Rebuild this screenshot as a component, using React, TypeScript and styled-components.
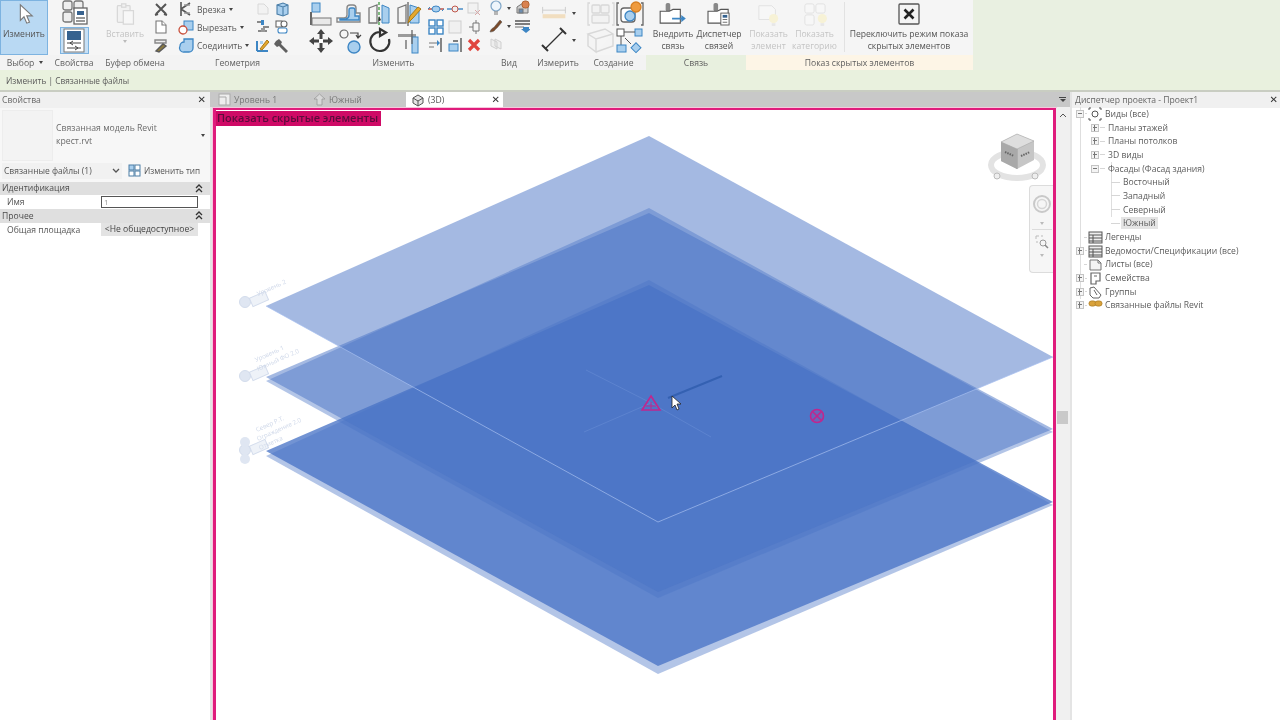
import React from "react";
import styled, { createGlobalStyle } from "styled-components";

const GlobalStyle = createGlobalStyle`
  html, body {
    margin: 0;
    padding: 0;
    width: 1280px;
    height: 720px;
    overflow: hidden;
    background: #fff;
  }
  * { box-sizing: border-box; }
`;

const BLUE = "#3d86c4";
const SKY = "#a9cfee";
const PALE = "#d8d8d8";

// all the ribbon pictures, drawn in their own little coordinates
const icons: Record<string, React.ReactNode> = {
  cursor: <path d="M8 2v17l4-4 3 7 3-1-3-7h6z" fill="#fff" stroke="#7a7a7a" strokeWidth="1.2" />,
  props: (
    <g fill="#eee" stroke="#777" strokeWidth="1.3">
      <rect x="2" y="1" width="9" height="9" rx="2" />
      <rect x="13" y="1" width="9" height="9" rx="2" />
      <rect x="2" y="12" width="9" height="10" rx="2" />
      <rect x="13" y="8" width="13" height="16" fill="#fff" stroke="#666" />
      <rect x="16" y="11" width="7" height="4" fill="#39638f" stroke="none" />
      <path d="M15 18h9M15 21h9" />
    </g>
  ),
  typeProps: (
    <g>
      <rect x="1" y="1" width="20" height="23" fill="#fff" stroke="#777" />
      <rect x="4" y="3" width="14" height="9" fill="#35628f" />
      <path d="M4 15h14M4 20h14" stroke="#444" strokeWidth="1.2" />
      <path d="M10 13l-3 2 3 2M12 18l3 2-3 2" fill="none" stroke="#444" />
    </g>
  ),
  paste: (
    <g fill="#f2f2f2" stroke={PALE} strokeWidth="1.5">
      <rect x="3" y="3" width="15" height="20" rx="1" />
      <rect x="8" y="1" width="5" height="4" />
      <rect x="10" y="9" width="12" height="16" fill="#f7f7f7" />
    </g>
  ),
  cut: <path d="M3 3l10 10M13 3L3 13M2 14l3-1M14 14l-3-1" stroke="#555" strokeWidth="2" fill="none" />,
  copy: (
    <g fill="#fff" stroke="#777" strokeWidth="1.1">
      <path d="M3 2h6l4 4v8H3z" />
      <path d="M9 2v4h4" />
    </g>
  ),
  brush: (
    <g fill="none" strokeWidth="1.4">
      <path d="M2 3h11v3H2z" stroke="#888" fill="#eee" />
      <path d="M3 14l7-7 3 2-7 6z" fill="#8c7b3f" stroke="#5a5a5a" />
    </g>
  ),
  join: (
    <g fill="none" stroke="#555" strokeWidth="1.6">
      <path d="M3 1v14M3 8l9-6M3 8l9 6" />
      <path d="M6 4h6M6 12h6" stroke="#999" />
    </g>
  ),
  cutGeo: (
    <g>
      <rect x="6" y="2" width="9" height="9" fill={SKY} stroke={BLUE} />
      <circle cx="5" cy="11" r="4" fill="#fff" stroke="#c8503c" strokeWidth="1.3" />
    </g>
  ),
  joinGeo: <path d="M2 9a4 4 0 014-4V2h9v9a4 4 0 01-4 4H6a4 4 0 01-4-6z" fill={SKY} stroke={BLUE} strokeWidth="1.3" />,
  docPale: <path d="M3 3h6l4 4v6H3z" fill="#f2f2f2" stroke={PALE} />,
  box3d: (
    <g stroke="#4a7ea8" strokeWidth="1.1">
      <path d="M3 4l6-2 5 2v9l-5 2-6-2z" fill={SKY} />
      <path d="M9 6v9M3 4l6 2 5-2" fill="none" />
    </g>
  ),
  wall: (
    <g>
      <path d="M2 3h5M8 8h6M3 12h9" stroke="#666" strokeWidth="1.4" />
      <rect x="6" y="1" width="3" height="5" fill={BLUE} />
      <rect x="6" y="9" width="4" height="4" fill="#999" />
    </g>
  ),
  shapes: (
    <g fill="#fff" stroke="#666" strokeWidth="1.1">
      <rect x="2" y="2" width="6" height="6" />
      <circle cx="10" cy="5" r="3" />
      <rect x="4" y="9" width="9" height="5" rx="2" stroke={BLUE} />
    </g>
  ),
  pencilPlan: (
    <g>
      <path d="M2 14V4M2 14h11" stroke={BLUE} strokeWidth="2" />
      <path d="M5 12L12 3l2 2-7 8z" fill="#e6a82c" stroke="#a87918" />
      <rect x="5" y="4" width="3" height="3" fill={SKY} />
    </g>
  ),
  wrench: <path d="M2 4l3-2 3 3-1 2 7 7-2 2-7-7-2 1-3-3z" fill="#606060" />,
  align: (
    <g>
      <rect x="3" y="1" width="8" height="9" fill={SKY} stroke={BLUE} />
      <rect x="1" y="10" width="2" height="13" fill="#666" />
      <rect x="3" y="16" width="19" height="7" fill="#e9e9e9" stroke="#777" />
    </g>
  ),
  offset: (
    <g fill="none" strokeWidth="1.4">
      <path d="M1 20v-4h7a3 3 0 003-3V6a3 3 0 013-3h3a3 3 0 013 3v5h4v9z" stroke="#888" fill="#f3f3f3" />
      <path d="M4 18v-1h6a4 4 0 003-4V8a2 2 0 012-2h2a2 2 0 012 2v6h4v4z" stroke={BLUE} fill={SKY} />
    </g>
  ),
  mirrorA: (
    <g>
      <path d="M2 6l8-3v18H2z" fill="#f4f4f4" stroke="#777" strokeWidth="1.3" />
      <path d="M22 6l-7-3v18h7z" fill={SKY} stroke={BLUE} />
      <path d="M12 0v24" stroke="#4aa04a" strokeWidth="1.4" strokeDasharray="3 2" />
      <path d="M12 14l-1 6 3-2z" fill="#333" />
    </g>
  ),
  mirrorB: (
    <g>
      <path d="M2 6l8-3v18H2z" fill="#f4f4f4" stroke="#777" strokeWidth="1.3" />
      <path d="M23 6l-9-3v18h9z" fill={SKY} stroke={BLUE} />
      <path d="M12 0v24" stroke="#555" strokeWidth="1.2" />
      <path d="M12 21l2-7 8-9 3 2-8 9z" fill="#e6a82c" stroke="#a87918" />
    </g>
  ),
  move: (
    <g fill="#444">
      <path d="M12 0l4 5h-2.500v5h-3V5H8zM12 24l4-5h-2.500v-5h-3v5H8zM0 12l5-4v2.500h5v3H5V16zM24 12l-5-4v2.500h-5v3h5V16z" />
      <rect x="10" y="10" width="4" height="4" fill="#fff" />
    </g>
  ),
  copyTo: (
    <g fill="none">
      <circle cx="6" cy="5" r="4" stroke="#666" strokeWidth="1.2" />
      <circle cx="16" cy="18" r="6" fill={SKY} stroke={BLUE} strokeWidth="1.4" />
      <path d="M12 4h8v4M18 6l2 3 3-3" stroke="#444" strokeWidth="1.2" />
    </g>
  ),
  rotate: <path d="M12 3a9.500 9.500 0 109 7M12 0v7l6-3.500z" fill="none" stroke="#333" strokeWidth="2.2" />,
  trim: (
    <g>
      <path d="M1 5h18v3H1z" fill="#9a9a9a" />
      <rect x="15" y="8" width="6" height="16" fill={SKY} stroke={BLUE} />
      <path d="M15 1v14M9 11v9" stroke="#666" strokeWidth="1.3" />
    </g>
  ),
  splitA: (
    <g fill="none">
      <path d="M1 7h6M11 7h6" stroke="#c0564a" strokeWidth="1.4" />
      <ellipse cx="9" cy="7" rx="4" ry="3" stroke={BLUE} fill={SKY} />
      <path d="M1 7l2-2M17 7l-2 2" stroke={BLUE} />
    </g>
  ),
  splitB: (
    <g fill="none">
      <path d="M1 7h16" stroke={BLUE} strokeWidth="1.4" />
      <ellipse cx="9" cy="7" rx="3" ry="3" stroke="#c0564a" fill="#eee" />
    </g>
  ),
  delPale: (
    <g fill="#f2f2f2" stroke="#cfcfcf">
      <rect x="2" y="2" width="10" height="10" />
      <path d="M9 9l5 5M14 9l-5 5" stroke="#d8a8a8" />
    </g>
  ),
  array: (
    <g fill="#fff" stroke={BLUE} strokeWidth="1.4">
      <rect x="1" y="1" width="6" height="6" />
      <rect x="9" y="1" width="6" height="6" />
      <rect x="1" y="9" width="6" height="6" />
      <rect x="9" y="9" width="6" height="6" />
    </g>
  ),
  scale: <rect x="2" y="2" width="12" height="12" fill="#f0f0f0" stroke="#cfcfcf" />,
  pin: <path d="M3 8h4M7 4h6v8H7zM10 1v3M10 12v3" fill="none" stroke="#777" />,
  unpinA: (
    <g>
      <path d="M1 6h8M1 10h5" stroke="#777" />
      <path d="M9 3l3 3-3 3z" fill={BLUE} />
      <path d="M13 1v14" stroke="#555" strokeWidth="1.4" />
    </g>
  ),
  unpinB: (
    <g>
      <rect x="2" y="7" width="9" height="7" fill={SKY} stroke={BLUE} />
      <path d="M6 4h5M14 1v14" stroke="#555" strokeWidth="1.4" />
    </g>
  ),
  del: <path d="M3 3l10 10M13 3L3 13" stroke="#e0453f" strokeWidth="3.2" />,
  bulb: (
    <g fill="none" stroke="#7da4c6" strokeWidth="1.2">
      <circle cx="8" cy="6" r="5" fill="#eef5fb" />
      <path d="M6 12h4M6 14h4" stroke="#777" />
    </g>
  ),
  house: (
    <g stroke="#777">
      <path d="M3 7l6-4 5 3v7H3z" fill="#cfcfcf" />
      <rect x="8" y="1" width="7" height="7" rx="3" fill="#d98250" stroke="#b26432" />
      <rect x="5" y="9" width="4" height="4" fill="#6d8db0" />
    </g>
  ),
  paint: <path d="M2 14c1-4 4-4 5-6l5-6 2 2-5 6c-2 1-2 4-7 4z" fill="#7a4a2a" stroke="#555" strokeWidth=".5" />,
  lines: (
    <g>
      <path d="M1 3h15M1 6h15" stroke="#555" strokeWidth="1.5" />
      <path d="M1 9h9" stroke="#888" strokeWidth="1.2" />
      <path d="M9 9h6v2h2l-5 4-5-4h2z" fill={BLUE} />
    </g>
  ),
  panes: <path d="M3 3l6 3v7l-6-3zM7 3l6 3v7l-6-3z" fill="#eeeeee" stroke="#cfcfcf" />,
  dim: (
    <g>
      <path d="M2 5h28M2 1v8M30 1v8" stroke="#c9c9c9" strokeWidth="1.1" />
      <rect x="2" y="10" width="28" height="5" fill="#f1dec0" />
    </g>
  ),
  measure: (
    <g stroke="#333" fill="none">
      <path d="M4 22L22 4" strokeWidth="1.2" />
      <path d="M1 18l6 6M19 1l6 6" strokeWidth="2" />
    </g>
  ),
  group: (
    <g fill="#f2f2f2" stroke={PALE} strokeWidth="1.3">
      <path d="M3 2H1v22h2M25 2h2v22h-2" fill="none" />
      <rect x="5" y="4" width="8" height="8" rx="1" />
      <rect x="14" y="4" width="8" height="8" rx="1" />
      <rect x="5" y="14" width="17" height="8" rx="1" />
    </g>
  ),
  groupOrange: (
    <g fill="#fff" stroke="#666" strokeWidth="1.3">
      <path d="M3 2H1v22h2M25 2h2v22h-2" fill="none" />
      <rect x="5" y="7" width="14" height="14" rx="3" />
      <circle cx="14" cy="15" r="5" fill={SKY} stroke={BLUE} />
      <circle cx="20" cy="6" r="5" fill="#ef9b3e" stroke="#d88124" />
    </g>
  ),
  extrude: (
    <g fill="#f4f4f4" stroke={PALE} strokeWidth="1.4">
      <path d="M1 6l17-5 8 5-17 5zM1 6v12l8 6V11M9 24l17-6V6" />
    </g>
  ),
  flow: (
    <g stroke="#555" fill="#fff">
      <rect x="1" y="1" width="7" height="7" />
      <rect x="19" y="1" width="7" height="7" fill={SKY} stroke={BLUE} />
      <path d="M8 4h11M5 8v9M9 10l6 6" />
      <rect x="1" y="17" width="9" height="7" fill={SKY} stroke={BLUE} />
      <rect x="17" y="16" width="7" height="7" transform="rotate(45 20 19)" fill={SKY} stroke={BLUE} />
    </g>
  ),
  embed: (
    <g>
      <rect x="7" y="0" width="5" height="9" rx="2" fill="#888" />
      <path d="M1 9h10l4-2h8v15H1z" fill="#fff" stroke="#555" strokeWidth="1.2" />
      <path d="M14 16h10v-3l5 4-5 4v-3H14z" fill={BLUE} />
    </g>
  ),
  manager: (
    <g>
      <rect x="7" y="0" width="5" height="9" rx="2" fill="#888" />
      <path d="M1 9h10l4-2h8v15H1z" fill="#fff" stroke="#555" strokeWidth="1.2" />
      <rect x="15" y="11" width="9" height="13" fill="#fff" stroke="#555" />
      <rect x="17" y="13" width="5" height="3" fill="#35628f" />
      <path d="M17 18h5M17 21h5" stroke="#666" />
    </g>
  ),
  showEl: (
    <g>
      <path d="M2 3h14l4 4v11H2z" fill="#f7f7f7" stroke="#e0e0e0" />
      <circle cx="18" cy="17" r="5" fill="#f7f2d6" />
      <rect x="16" y="22" width="4" height="3" fill="#e7e7e7" />
    </g>
  ),
  showCat: (
    <g>
      <g fill="#f7f7f7" stroke="#e0e0e0">
        <rect x="2" y="1" width="10" height="10" rx="2" />
        <rect x="14" y="1" width="10" height="10" rx="2" />
        <rect x="2" y="13" width="10" height="11" rx="2" />
      </g>
      <circle cx="21" cy="17" r="5" fill="#f7f2d6" />
      <rect x="19" y="22" width="4" height="3" fill="#e7e7e7" />
    </g>
  ),
  toggle: (
    <g>
      <rect x="1" y="1" width="20" height="20" rx="1" fill="#f4f4f4" stroke="#555" strokeWidth="1.3" />
      <path d="M6.500 6.500l9 9M15.500 6.500l-9 9" stroke="#222" strokeWidth="2.600" />
    </g>
  ),
  tabPlan: (
    <g fill="none" stroke="#aaa">
      <rect x="1" y="1" width="11" height="11" fill="#eee" />
      <path d="M1 4h7v8" />
    </g>
  ),
  tabElev: <path d="M6.500 1L1 6h3v6h5V6h3z" fill="#d8d8d8" stroke="#9a9a9a" strokeWidth=".8" />,
  tab3d: (
    <g stroke="#555" fill="#e5e5e5">
      <path d="M2 5l5-3 5 3v5l-5 3-5-3z" />
      <path d="M2 5l5 3 5-3M7 8v5" fill="none" />
    </g>
  ),
  changeType: (
    <g fill="#fff" stroke="#4d7ea6">
      <rect x="1" y="1" width="5" height="5" fill={SKY} />
      <rect x="7" y="1" width="5" height="5" />
      <rect x="1" y="7" width="5" height="5" />
      <rect x="7" y="7" width="5" height="5" />
    </g>
  ),
  collapse: <path d="M1 4l3-3 3 3M1 8l3-3 3 3" fill="none" stroke="#333" strokeWidth="1.3" />,
  chevron: <path d="M1 1l3 3 3-3" fill="none" stroke="#555" strokeWidth="1.3" />,
  treeViews: (
    <g fill="none" stroke="#555">
      <circle cx="7" cy="7" r="3" />
      <path d="M1 3V1h2M11 1h2v2M13 11v2h-2M3 13H1v-2" />
    </g>
  ),
  treeTable: (
    <g fill="#eee" stroke="#555">
      <rect x="1" y="2" width="13" height="11" />
      <path d="M1 5h13M1 8h13M1 11h13M5 5v8" fill="none" />
    </g>
  ),
  treeSheet: <path d="M2 3h8l3 3v7H2zM10 3v3h3" fill="#f4f4f4" stroke="#777" />,
  treeFamily: <path d="M3 2h9v8H8v3H3zM6 5h3" fill="none" stroke="#666" strokeWidth="1.2" />,
  treeGroup: <path d="M2 3l4-1 7 8-2 3H5l-3-3zM6 5l3 5" fill="none" stroke="#666" />,
  treeLink: (
    <g fill="#d9a23a" stroke="#b9872a">
      <rect x="1" y="3" width="7" height="5" rx="2.500" />
      <rect x="7" y="3" width="7" height="5" rx="2.500" />
    </g>
  ),
};

const Frame = styled.div`
  width: 1280px;
  height: 720px;
  display: flex;
  flex-direction: column;
  overflow: hidden;
  font-family: "Open Sans", "Liberation Sans", sans-serif;
  font-size: 8.6px;
  color: #555;
  filter: blur(0.35px);
`;

const Ribbon = styled.div`
  height: 70px;
  display: flex;
  background: #e9f0e1;
`;
const Panel = styled.div<{ $w: number }>`
  width: ${(p) => p.$w}px;
  flex: none;
  display: flex;
  flex-direction: column;
  background: #f5f5f5;
`;
const PanelBody = styled.div<{ $pad?: number; $gap?: number }>`
  height: 55px;
  display: flex;
  padding-left: ${(p) => p.$pad ?? 0}px;
  gap: ${(p) => p.$gap ?? 0}px;
`;
const PanelFoot = styled.div<{ $bg?: string; $shift?: number }>`
  height: 15px;
  background: ${(p) => p.$bg ?? "#f3f3f3"};
  display: flex;
  align-items: center;
  justify-content: center;
  gap: 5px;
  padding-right: ${(p) => p.$shift ?? 0}px;
  font-size: 8.6px;
  color: #606060;
  white-space: nowrap;
`;
const Svg = styled.svg`
  display: block;
  flex: none;
  overflow: visible;
`;
const Caret = styled.span<{ $pale?: boolean }>`
  width: 0;
  height: 0;
  flex: none;
  border-left: 2px solid transparent;
  border-right: 2px solid transparent;
  border-top: 3px solid ${(p) => (p.$pale ? "#bbb" : "#444")};
`;
const BigButton = styled.div<{ $on?: boolean; $w?: number }>`
  width: ${(p) => p.$w ?? 48}px;
  flex: none;
  display: flex;
  flex-direction: column;
  align-items: center;
  padding-top: 3px;
  text-align: center;
  line-height: 12px;
  white-space: nowrap;
  background: ${(p) => (p.$on ? "#b9d9f3" : "transparent")};
  box-shadow: ${(p) => (p.$on ? "inset 0 0 0 1px #7db3e0" : "none")};
`;
const BigLabel = styled.div<{ $pale?: boolean }>`
  margin-top: 3px;
  color: ${(p) => (p.$pale ? "#c4c4c4" : "#555")};
`;
const PropsColumn = styled.div`
  width: 48px;
  display: flex;
  flex-direction: column;
  align-items: center;
`;
const ToggleBox = styled.div`
  width: 29px;
  height: 27px;
  margin-top: 1px;
  background: #c6e0f6;
  box-shadow: inset 0 0 0 1px #7db3e0;
  display: flex;
  align-items: center;
  justify-content: center;
`;
const ToolColumn = styled.div<{ $w?: number; $gap?: number; $top?: number; $left?: number }>`
  width: ${(p) => (p.$w ? `${p.$w}px` : "auto")};
  flex: none;
  display: flex;
  flex-direction: column;
  gap: ${(p) => p.$gap ?? 2}px;
  padding-top: ${(p) => p.$top ?? 1}px;
  padding-left: ${(p) => p.$left ?? 0}px;
`;
const ToolRow = styled.div<{ $h?: number; $gap?: number }>`
  height: ${(p) => p.$h ?? 16}px;
  display: flex;
  align-items: center;
  gap: ${(p) => p.$gap ?? 1}px;
  white-space: nowrap;
  color: #555;
  font-size: 8.5px;
`;
const IconGrid = styled.div<{ $cols: number; $col: number; $row: number; $top?: number }>`
  display: grid;
  grid-template-columns: repeat(${(p) => p.$cols}, ${(p) => p.$col}px);
  grid-auto-rows: ${(p) => p.$row}px;
  padding-top: ${(p) => p.$top ?? 0}px;
  align-items: center;
  justify-items: center;
`;
const Divider = styled.div`
  width: 1px;
  height: 50px;
  margin: 2px 4px 0 6px;
  background: #e2e2e2;
`;

const ContextBar = styled.div`
  height: 22px;
  flex: none;
  padding-left: 6px;
  display: flex;
  align-items: center;
  background: #e9f1de;
  border-bottom: 2px solid #c9cdc2;
  font-size: 8.3px;
  color: #5a5a5a;
`;

const Workspace = styled.div`
  flex: 1;
  min-height: 0;
  display: flex;
  background: #e4e4e4;
`;
const LeftPane = styled.aside`
  width: 210px;
  flex: none;
  display: flex;
  flex-direction: column;
  background: #fff;
`;
const PaneHead = styled.div<{ $left?: number; $right?: number }>`
  height: 16px;
  flex: none;
  padding: 0 ${(p) => p.$right ?? 4}px 0 ${(p) => p.$left ?? 2}px;
  display: flex;
  align-items: center;
  justify-content: space-between;
  background: #f0f0f0;
  color: #666;
`;
const CloseMark = styled.span`
  font-family: "DejaVu Sans", sans-serif;
  font-weight: 700;
  font-size: 10px;
  color: #333;
  line-height: 1;
`;
const TypeBlock = styled.div`
  height: 54px;
  flex: none;
  display: flex;
  align-items: center;
  background: #f7f7f7;
  padding: 0 5px 0 3px;
  gap: 4px;
`;
const Thumb = styled.div`
  width: 49px;
  height: 49px;
  flex: none;
  background: #f3f3f3;
  box-shadow: 0 0 0 1px #ededed;
`;
const TypeName = styled.div`
  flex: 1;
  line-height: 13px;
  font-size: 8.7px;
  color: #6b6b6b;
  white-space: nowrap;
`;
const TypeRow = styled.div`
  height: 19.500px;
  flex: none;
  display: flex;
  align-items: center;
  background: #f7f7f7;
  padding: 0 2px 2px;
  gap: 6px;
`;
const SelectBox = styled.div`
  width: 120px;
  height: 16px;
  flex: none;
  background: #f1f1f1;
  display: flex;
  align-items: center;
  justify-content: space-between;
  padding: 0 2px;
  font-size: 8.5px;
  color: #555;
`;
const ChangeType = styled.div`
  display: flex;
  align-items: center;
  gap: 3px;
  font-size: 8.2px;
  color: #555;
  white-space: nowrap;
`;
const SectionHead = styled.div`
  height: 13.500px;
  flex: none;
  padding: 0 7px 0 2px;
  display: flex;
  align-items: center;
  justify-content: space-between;
  background: #dfdfdf;
  color: #4c4c4c;
`;
const PropRow = styled.div`
  height: 14px;
  flex: none;
  display: flex;
  align-items: center;
  background: #fff;
  padding-right: 12px;
`;
const PropName = styled.div`
  width: 101px;
  flex: none;
  padding-left: 7px;
  color: #555;
  white-space: nowrap;
`;
const NameInput = styled.div`
  flex: 1;
  height: 12px;
  border: 1px solid #555;
  background: #fff;
  padding-left: 2px;
  font-size: 8px;
  line-height: 10px;
  color: #999;
`;
const ValueButton = styled.div`
  flex: 1;
  height: 13px;
  background: #e3e3e3;
  text-align: center;
  font-size: 8.6px;
  line-height: 13px;
  color: #444;
  white-space: nowrap;
`;

const Center = styled.main`
  width: 860px;
  flex: none;
  display: flex;
  flex-direction: column;
  padding-left: 3px;
`;
const TabStrip = styled.div`
  height: 15px;
  flex: none;
  margin-left: -3px;
  display: flex;
  align-items: center;
  background: #c8c8c8;
  padding-left: 3px;
  position: relative;
`;
const Tab = styled.div<{ $active?: boolean; $w: number }>`
  width: ${(p) => p.$w}px;
  height: 100%;
  flex: none;
  display: flex;
  align-items: center;
  gap: 3px;
  padding: 0 3px 0 5px;
  background: ${(p) => (p.$active ? "#fff" : "transparent")};
  color: ${(p) => (p.$active ? "#555" : "#777")};
`;
const TabClose = styled(CloseMark)`
  margin-left: auto;
`;
const StripMenu = styled.div`
  position: absolute;
  right: 4px;
  top: 5px;
  width: 7px;
  height: 5px;
  border-top: 1px solid #444;
  &::after {
    content: "";
    display: block;
    margin: 1px auto 0;
    width: 0;
    height: 0;
    border-left: 3.500px solid transparent;
    border-right: 3.500px solid transparent;
    border-top: 3px solid #444;
  }
`;
const ViewRow = styled.div`
  flex: 1;
  min-height: 0;
  display: flex;
  padding-top: 1px;
  background: #f0f0f0;
`;
const Viewport = styled.div`
  width: 843px;
  flex: none;
  position: relative;
  overflow: hidden;
  background: #fff;
  border: solid #df1c7c;
  border-width: 2px 3px 0;
  box-shadow: 0 0 0 1px #f7c6dd;
`;
const ModeLabel = styled.div`
  position: absolute;
  left: 0;
  top: 1px;
  width: 165px;
  height: 15px;
  background: #cf0a66;
  color: #5c0c3c;
  font-size: 11px;
  font-weight: 600;
  line-height: 14px;
  padding-left: 1px;
  white-space: nowrap;
  overflow: hidden;
`;
const Scene = styled.svg`
  display: block;
`;
const CubeSvg = styled.svg`
  position: absolute;
  right: 5px;
  top: 20px;
`;
const NavBar = styled.div`
  position: absolute;
  right: 0;
  top: 75px;
  width: 24px;
  height: 88px;
  background: #f6f6f6;
  border: 1px solid #dcdcdc;
  border-right: 0;
  border-radius: 4px 0 0 4px;
  display: flex;
  flex-direction: column;
  align-items: center;
  padding-top: 6px;
  gap: 4px;
`;
const NavRule = styled.div`
  width: 20px;
  height: 1px;
  background: #dcdcdc;
`;
const ScrollRail = styled.div`
  flex: 1;
  position: relative;
  background: #f0f0f0;
  display: flex;
  justify-content: center;
  padding-top: 5px;
`;
const ScrollThumb = styled.div`
  position: absolute;
  left: 1px;
  right: 2px;
  top: 303px;
  height: 13px;
  background: #c9c9c9;
`;

const RightPane = styled.aside`
  flex: 1;
  margin-left: 2px;
  display: flex;
  flex-direction: column;
  background: #fff;
`;
const TreeWrap = styled.div`
  margin-top: -1px;
  padding: 0 0 0 4px;
`;
const TreeRow = styled.div<{ $indent: number; $rail?: boolean; $sub?: boolean }>`
  height: 13.700px;
  display: flex;
  align-items: center;
  padding-left: ${(p) => p.$indent}px;
  gap: 1px;
  color: #5b5b5b;
  font-size: 8.600px;
  white-space: nowrap;
  background-image: ${(p) => (p.$rail ? "linear-gradient(#dedede, #dedede)" : "none")},
    ${(p) => (p.$sub ? "linear-gradient(#dedede, #dedede)" : "none")};
  background-repeat: no-repeat;
  background-position: 4px 0, 35px 0;
  background-size: 1px 100%;
`;
const TreeText = styled.span`
  margin-left: 2px;
`;
const Expander = styled.span<{ $plus?: boolean }>`
  width: 8px;
  height: 8px;
  flex: none;
  background: #f4f4f4;
  border: 1px solid #c4c4c4;
  position: relative;
  &::after {
    content: "";
    position: absolute;
    left: 1px;
    right: 1px;
    top: 2px;
    height: 1px;
    background: #777;
  }
  &::before {
    content: "";
    display: ${(p) => (p.$plus ? "block" : "none")};
    position: absolute;
    top: 0;
    bottom: 0;
    left: 2px;
    width: 1px;
    background: #777;
  }
`;
const Dash = styled.span<{ $w: number }>`
  width: ${(p) => p.$w}px;
  flex: none;
  border-top: 1px solid #d6d6d6;
`;
const Selected = styled(TreeText)`
  background: #e4e4e4;
  padding: 0 2px;
  margin-left: 0;
`;

const Glyph = ({ n, w = 16, h, vb }: { n: string; w?: number; h?: number; vb?: string }) => (
  <Svg width={w} height={h ?? w} viewBox={vb ?? `0 0 ${w} ${h ?? w}`}>
    {icons[n]}
  </Svg>
);

const treeItems: { t: string; indent: number; box?: "plus" | "minus"; dash?: number; icon?: string; sel?: boolean; sub?: boolean; rail?: boolean }[] = [
  { t: "Виды (все)", indent: 0, box: "minus", dash: 2, icon: "treeViews", rail: true },
  { t: "Планы этажей", indent: 15, box: "plus", dash: 5, rail: true },
  { t: "Планы потолков", indent: 15, box: "plus", dash: 5, rail: true },
  { t: "3D виды", indent: 15, box: "plus", dash: 5, rail: true },
  { t: "Фасады (Фасад здания)", indent: 15, box: "minus", dash: 5, rail: true, sub: true },
  { t: "Восточный", indent: 35, dash: 9, rail: true, sub: true },
  { t: "Западный", indent: 35, dash: 9, rail: true, sub: true },
  { t: "Северный", indent: 35, dash: 9, rail: true, sub: true },
  { t: "Южный", indent: 35, dash: 9, sel: true, rail: true },
  { t: "Легенды", indent: 8, dash: 3, icon: "treeTable", rail: true },
  { t: "Ведомости/Спецификации (все)", indent: 0, box: "plus", dash: 2, icon: "treeTable", rail: true },
  { t: "Листы (все)", indent: 8, dash: 3, icon: "treeSheet", rail: true },
  { t: "Семейства", indent: 0, box: "plus", dash: 2, icon: "treeFamily", rail: true },
  { t: "Группы", indent: 0, box: "plus", dash: 2, icon: "treeGroup", rail: true },
  { t: "Связанные файлы Revit", indent: 0, box: "plus", dash: 2, icon: "treeLink" },
];

const PLATE = "rgb(74,116,198)";
const poly = (apex: number, right: number, bottom: number, left: number) =>
  `649,${apex} 1053,${right} 658,${bottom} 266,${left}`;

// the three floor plates, the level heads and the small markers in the model
const Model = () => (
  <Scene width="837" height="610" viewBox="216 110 837 610">
    <polygon points={poly(280, 505, 674, 456)} fill={PLATE} opacity="0.42" />
    <polygon points={poly(285, 502, 666, 451)} fill={PLATE} opacity="0.78" />
    <polygon points={poly(208, 432, 598, 381)} fill={PLATE} opacity="0.42" />
    <polygon points={poly(213, 429, 592, 377)} fill={PLATE} opacity="0.5" />
    <polygon points={poly(136, 357, 522, 306)} fill={PLATE} opacity="0.5" />
    <polyline points="266,306 658,522 1053,357" fill="none" stroke="#a6bff0" strokeWidth="1" opacity=".7" />
    <path d="M586 370l65 33M584 432l67-29M651 403l60 34" stroke="#6f93d8" strokeWidth="1" opacity=".45" />
    <path d="M668 398l54-22" stroke="#2f5cae" strokeWidth="2" opacity=".8" />
    <g fill="none" stroke="#c0268e" strokeWidth="1.600">
      <path d="M651 396l9 14h-18z" />
      <path d="M651 402v7M646 406h10" strokeWidth="1" />
      <circle cx="817" cy="416" r="6.500" fill="#b43a9c" fillOpacity=".25" />
      <path d="M813 412l8 8M821 412l-8 8" />
    </g>
    <path d="M672 396v12l3-3 2 5 2-1-2-5h4z" fill="#fff" stroke="#222" strokeWidth=".8" />
    {[302, 376, 450].map((y) => (
      <g key={y} fill="#dfe6f2" stroke="#d3dcec" strokeWidth="1">
        <circle cx="245" cy={y} r="5.500" />
        <rect x="251" y={y - 4} width="17" height="9" fill="#eef2f8" transform={`rotate(-24 251 ${y})`} />
      </g>
    ))}
    <g fill="#cfd8e9" fontSize="6.200" fontFamily="Open Sans, sans-serif">
      <text transform="translate(258 296) rotate(-24)">Уровень 2</text>
      <text transform="translate(256 362) rotate(-24)">Уровень 1</text>
      <text transform="translate(258 371) rotate(-24)">Южный ФО 2.0</text>
      <text transform="translate(257 432) rotate(-24)">Север Р.Т.</text>
      <text transform="translate(258 441) rotate(-24)">Ограждение 2.0</text>
      <text transform="translate(260 450) rotate(-24)">Отметка</text>
    </g>
    <g fill="#dfe6f2">
      <circle cx="245" cy="442" r="5" />
      <circle cx="245" cy="459" r="5" />
    </g>
  </Scene>
);

const ViewCube = () => (
  <CubeSvg width="62" height="56" viewBox="0 0 62 56">
    <ellipse cx="31" cy="35" rx="26" ry="13" fill="none" stroke="#e3e3e3" strokeWidth="6" />
    <path d="M31 4l17 7v19l-17 9-16-8V12z" fill="#c6c6c6" />
    <path d="M15 12l16 7 17-8-17-7z" fill="#dedede" stroke="#aaa" strokeWidth=".6" />
    <path d="M31 19v20" stroke="#8f8f8f" strokeWidth=".8" />
    <path d="M15 12v19l16 8V19z" fill="#a9a9a9" />
    <path d="M19 22l9 4M35 26l9-4" stroke="#666" strokeWidth="2" strokeDasharray="1.500 1" />
    <circle cx="11" cy="46" r="3" fill="#eee" stroke="#bbb" />
    <circle cx="49" cy="46" r="3" fill="#eee" stroke="#bbb" />
  </CubeSvg>
);

const App: React.FC = () => (
  <Frame>
    <GlobalStyle />
    <Ribbon>
      <Panel $w={50}>
        <PanelBody>
          <BigButton $on>
            <Glyph n="cursor" w={24} h={22} vb="0 0 24 24" />
            <BigLabel>Изменить</BigLabel>
          </BigButton>
        </PanelBody>
        <PanelFoot>
          Выбор <Caret />
        </PanelFoot>
      </Panel>
      <Panel $w={48}>
        <PanelBody>
          <PropsColumn>
            <Glyph n="props" w={26} />
            <ToggleBox>
              <Glyph n="typeProps" w={22} h={25} />
            </ToggleBox>
          </PropsColumn>
        </PanelBody>
        <PanelFoot>Свойства</PanelFoot>
      </Panel>
      <Panel $w={74}>
        <PanelBody $pad={2}>
          <BigButton $w={50}>
            <Glyph n="paste" w={24} h={22} vb="0 0 24 26" />
            <BigLabel $pale>Вставить</BigLabel>
            <Caret $pale />
          </BigButton>
          <ToolColumn $top={1} $gap={2} $left={3}>
            {["cut", "copy", "brush"].map((n) => (
              <ToolRow key={n}>
                <Glyph n={n} />
              </ToolRow>
            ))}
          </ToolColumn>
        </PanelBody>
        <PanelFoot>Буфер обмена</PanelFoot>
      </Panel>
      <Panel $w={131}>
        <PanelBody $pad={6} $gap={0}>
          <ToolColumn $w={75}>
            <ToolRow $gap={3}>
              <Glyph n="join" /> Врезка <Caret />
            </ToolRow>
            <ToolRow $gap={3}>
              <Glyph n="cutGeo" /> Вырезать <Caret />
            </ToolRow>
            <ToolRow $gap={3}>
              <Glyph n="joinGeo" /> Соединить <Caret />
            </ToolRow>
          </ToolColumn>
          <IconGrid $cols={2} $col={19} $row={18}>
            <Glyph n="docPale" />
            <Glyph n="box3d" />
            <Glyph n="wall" />
            <Glyph n="shapes" />
            <Glyph n="pencilPlan" />
            <Glyph n="wrench" />
          </IconGrid>
        </PanelBody>
        <PanelFoot>Геометрия</PanelFoot>
      </Panel>
      <Panel $w={185}>
        <PanelBody $pad={3} $gap={2}>
          <IconGrid $cols={4} $col={29.500} $row={27}>
            <Glyph n="align" w={24} />
            <Glyph n="offset" w={28} h={24} />
            <Glyph n="mirrorA" w={26} h={24} />
            <Glyph n="mirrorB" w={26} h={24} />
            <Glyph n="move" w={24} />
            <Glyph n="copyTo" w={24} />
            <Glyph n="rotate" w={24} />
            <Glyph n="trim" w={24} />
          </IconGrid>
          <IconGrid $cols={3} $col={19} $row={18}>
            <Glyph n="splitA" w={18} h={14} />
            <Glyph n="splitB" w={18} h={14} />
            <Glyph n="delPale" />
            <Glyph n="array" />
            <Glyph n="scale" />
            <Glyph n="pin" />
            <Glyph n="unpinA" />
            <Glyph n="unpinB" />
            <Glyph n="del" />
          </IconGrid>
        </PanelBody>
        <PanelFoot $shift={4}>Изменить</PanelFoot>
      </Panel>
      <Panel $w={42}>
        <PanelBody>
          <ToolColumn $top={0} $gap={2}>
            <ToolRow $gap={3}>
              <Glyph n="bulb" /> <Caret /> <Glyph n="house" />
            </ToolRow>
            <ToolRow $gap={3}>
              <Glyph n="paint" /> <Caret /> <Glyph n="lines" />
            </ToolRow>
            <ToolRow>
              <Glyph n="panes" />
            </ToolRow>
          </ToolColumn>
        </PanelBody>
        <PanelFoot>Вид</PanelFoot>
      </Panel>
      <Panel $w={56}>
        <PanelBody $pad={11}>
          <ToolColumn $top={5} $gap={6}>
            <ToolRow $h={16} $gap={5}>
              <Glyph n="dim" w={26} h={14} vb="0 0 32 17" /> <Caret />
            </ToolRow>
            <ToolRow $h={26} $gap={5}>
              <Glyph n="measure" w={26} /> <Caret />
            </ToolRow>
          </ToolColumn>
        </PanelBody>
        <PanelFoot>Измерить</PanelFoot>
      </Panel>
      <Panel $w={60}>
        <PanelBody>
          <IconGrid $cols={2} $col={29} $row={27}>
            <Glyph n="group" w={28} h={25} />
            <Glyph n="groupOrange" w={28} h={25} />
            <Glyph n="extrude" w={28} h={25} />
            <Glyph n="flow" w={28} h={25} />
          </IconGrid>
        </PanelBody>
        <PanelFoot $shift={5}>Создание</PanelFoot>
      </Panel>
      <Panel $w={100}>
        <PanelBody $pad={4}>
          <BigButton $w={46}>
            <Glyph n="embed" w={28} h={22} vb="0 0 30 24" />
            <BigLabel>
              Внедрить
              <br />
              связь
            </BigLabel>
          </BigButton>
          <BigButton $w={46}>
            <Glyph n="manager" w={24} h={22} vb="0 0 26 24" />
            <BigLabel>
              Диспетчер
              <br />
              связей
            </BigLabel>
          </BigButton>
        </PanelBody>
        <PanelFoot $bg="#e8f0df">Связь</PanelFoot>
      </Panel>
      <Panel $w={227}>
        <PanelBody>
          <BigButton $w={45}>
            <Glyph n="showEl" w={24} h={22} vb="0 0 26 24" />
            <BigLabel $pale>
              Показать
              <br />
              элемент
            </BigLabel>
          </BigButton>
          <BigButton $w={47}>
            <Glyph n="showCat" w={24} h={22} vb="0 0 26 24" />
            <BigLabel $pale>
              Показать
              <br />
              категорию
            </BigLabel>
          </BigButton>
          <Divider />
          <BigButton $w={120}>
            <Glyph n="toggle" w={22} h={22} />
            <BigLabel>
              Переключить режим показа
              <br />
              скрытых элементов
            </BigLabel>
          </BigButton>
        </PanelBody>
        <PanelFoot $bg="#fdf5e6">Показ скрытых элементов</PanelFoot>
      </Panel>
    </Ribbon>
    <ContextBar>Изменить | Связанные файлы</ContextBar>
    <Workspace>
      <LeftPane>
        <PaneHead>
          Свойства <CloseMark>✕</CloseMark>
        </PaneHead>
        <TypeBlock>
          <Thumb />
          <TypeName>
            Связанная модель Revit
            <br />
            крест.rvt
          </TypeName>
          <Caret />
        </TypeBlock>
        <TypeRow>
          <SelectBox>
            Связанные файлы (1) <Glyph n="chevron" w={8} h={5} />
          </SelectBox>
          <ChangeType>
            <Glyph n="changeType" w={13} />
            Изменить тип
          </ChangeType>
        </TypeRow>
        <SectionHead>
          Идентификация <Glyph n="collapse" w={8} h={9} />
        </SectionHead>
        <PropRow>
          <PropName>Имя</PropName>
          <NameInput>1</NameInput>
        </PropRow>
        <SectionHead>
          Прочее <Glyph n="collapse" w={8} h={9} />
        </SectionHead>
        <PropRow>
          <PropName>Общая площадка</PropName>
          <ValueButton>&lt;Не общедоступное&gt;</ValueButton>
        </PropRow>
      </LeftPane>
      <Center>
        <TabStrip>
          <Tab $w={95}>
            <Glyph n="tabPlan" w={13} /> Уровень 1
          </Tab>
          <Tab $w={98}>
            <Glyph n="tabElev" w={13} /> Южный
          </Tab>
          <Tab $active $w={97}>
            <Glyph n="tab3d" w={14} /> (3D)
            <TabClose>✕</TabClose>
          </Tab>
          <StripMenu />
        </TabStrip>
        <ViewRow>
          <Viewport>
            <Model />
            <ModeLabel>Показать скрытые элементы</ModeLabel>
            <ViewCube />
            <NavBar>
              <Svg width="20" height="26" viewBox="0 0 20 26">
                <circle cx="10" cy="12" r="8" fill="none" stroke="#c9c9c9" strokeWidth="2" />
                <circle cx="10" cy="12" r="4.500" fill="none" stroke="#d6d6d6" strokeWidth="1.500" />
              </Svg>
              <Caret $pale />
              <NavRule />
              <Svg width="16" height="16" viewBox="0 0 16 16">
                <path d="M2 2h3M2 2v3M9 2h-2M3 9v-2" stroke="#bbb" fill="none" />
                <circle cx="9" cy="9" r="3" fill="none" stroke="#999" />
                <path d="M11 11l3 3" stroke="#888" strokeWidth="1.500" />
              </Svg>
              <Caret $pale />
            </NavBar>
          </Viewport>
          <ScrollRail>
            <Svg width="8" height="5" viewBox="0 0 8 5">
              <path d="M1 4l3-3 3 3" fill="none" stroke="#555" />
            </Svg>
            <ScrollThumb />
          </ScrollRail>
        </ViewRow>
      </Center>
      <RightPane>
        <PaneHead $left={3} $right={2}>
          <span>Диспетчер проекта - Проект1</span>
          <CloseMark>✕</CloseMark>
        </PaneHead>
        <TreeWrap>
          {treeItems.map((it) => (
            <TreeRow key={it.t} $indent={it.indent} $rail={it.rail} $sub={it.sub}>
              {it.box && <Expander $plus={it.box === "plus"} />}
              {it.dash && <Dash $w={it.dash} />}
              {it.icon && <Glyph n={it.icon} w={14} />}
              {it.sel ? <Selected>{it.t}</Selected> : <TreeText>{it.t}</TreeText>}
            </TreeRow>
          ))}
        </TreeWrap>
      </RightPane>
    </Workspace>
  </Frame>
);

export default App;
